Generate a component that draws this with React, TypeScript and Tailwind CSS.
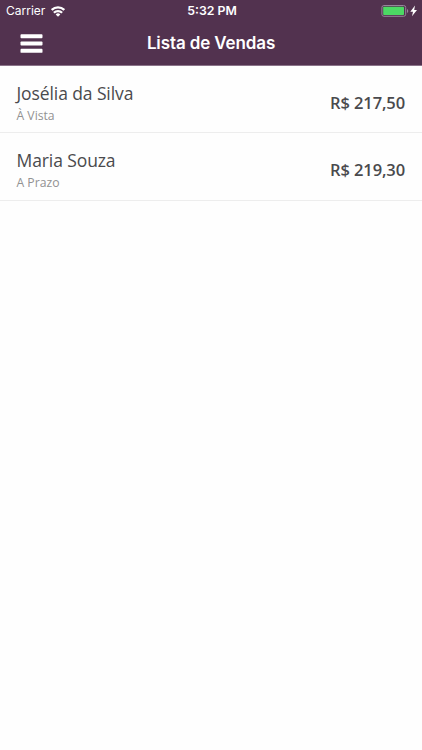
import { memo } from "react";

interface Sale {
  id: number;
  customer: string;
  payment: string;
  total: string;
}

const sales: Sale[] = [
  { id: 1, customer: "Josélia da Silva", payment: "À Vista", total: "R$ 217,50" },
  { id: 2, customer: "Maria Souza", payment: "A Prazo", total: "R$ 219,30" },
];

const WifiIcon = () => (
  <svg width="14" height="11" viewBox="0 0 14 11" fill="none" stroke="white" strokeWidth="2.3">
    <path d="M0.7 4a9 9 0 0 1 12.6 0" />
    <path d="M2.9 6.8a5.8 5.8 0 0 1 8.2 0" />
    <path d="M7 10.8L4.7 8.5a3.2 3.2 0 0 1 4.6 0z" fill="white" stroke="none" />
  </svg>
);

const BatteryIcon = () => (
  <svg width="37" height="12" viewBox="0 0 37 12">
    <rect x="0.9" y="0.5" width="23.8" height="10.8" rx="2" fill="none" stroke="#97849a" />
    <rect x="2.2" y="1.8" width="20.8" height="8.2" rx="0.8" fill="#4cd964" />
    <path d="M26 4v4a2.2 2.2 0 0 0 0-4z" fill="#97849a" />
    <path d="M34 0.6L29.3 6.7h2.7L31 11.3l5-6.2H33.2z" fill="white" />
  </svg>
);

const MenuIcon = () => (
  <svg width="23" height="20" viewBox="0 0 23 20" fill="white">
    <rect x="0.5" y="0.2" width="22" height="4" rx="0.9" />
    <rect x="0.5" y="7.5" width="22" height="4" rx="0.9" />
    <rect x="0.5" y="14.8" width="22" height="4" rx="0.9" />
  </svg>
);

const StatusBar = () => (
  <div className="grid h-[22px] grid-cols-3 items-center pr-1 pl-1.5 text-[12px]">
    <div className="flex items-center gap-[6px]">
      <span>Carrier</span>
      <WifiIcon />
    </div>
    <span className="pt-px text-center text-[12.3px] font-[560]">5:32 PM</span>
    <div className="flex justify-end">
      <BatteryIcon />
    </div>
  </div>
);

const SaleRow = memo<{ sale: Sale }>(({ sale }) => (
  <li className="flex h-[67px] items-center justify-between border-b border-[#ededed] pt-[7px] pr-[17px] pl-[16.5px] font-['Open_Sans',sans-serif] last:h-[68px]">
    <div>
      <p className="text-[17.5px] leading-[25px] tracking-[-0.1px] text-[#4a4a4d]">{sale.customer}</p>
      <p className="pt-px text-[12.2px] leading-[18px] text-[#929292]">{sale.payment}</p>
    </div>
    <span className="pt-px text-[16.5px] font-[580] tracking-[-0.11px] text-[#4a4a4d]">{sale.total}</span>
  </li>
));

SaleRow.displayName = "SaleRow";

const App = () => (
  <div className="min-h-screen bg-[#fefefe]">
    <header className="h-[66px] border-b border-[#8a7389] bg-[#52324f] font-['Inter',sans-serif] text-white">
      <StatusBar />
      <div className="grid h-[43px] grid-cols-[1fr_auto_1fr] items-center">
        <button aria-label="Abrir menu" className="ml-[20px] w-[23px]">
          <MenuIcon />
        </button>
        <h1 className="text-[17px] font-[560] tracking-[-0.12px]">Lista de Vendas</h1>
      </div>
    </header>
    <ul>
      {sales.map((sale) => (
        <SaleRow key={sale.id} sale={sale} />
      ))}
    </ul>
  </div>
);

export default App;
